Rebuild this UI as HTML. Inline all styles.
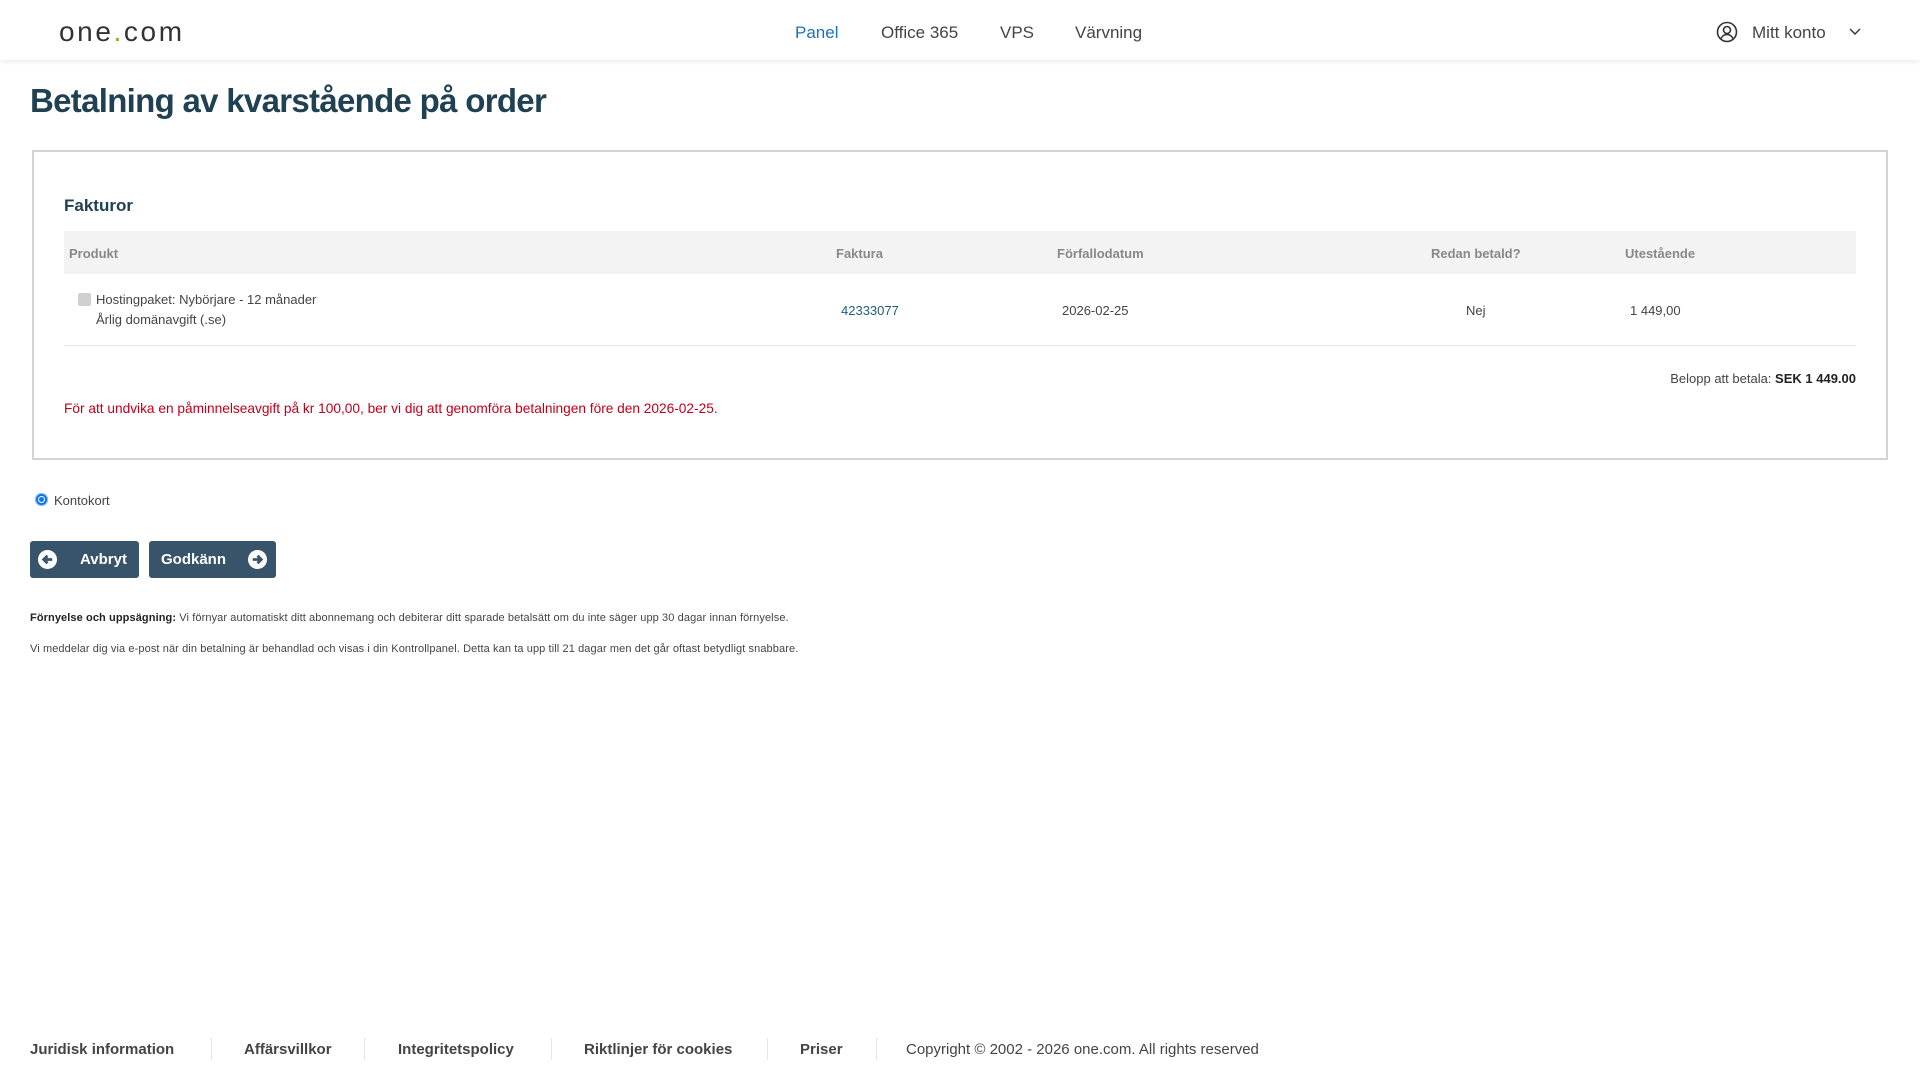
<!DOCTYPE html>
<html><head><meta charset="utf-8"><style>
*{margin:0;padding:0;box-sizing:border-box}
body{width:1920px;height:1080px;background:#fff;font-family:"Liberation Sans",sans-serif;color:#333;position:relative;overflow:hidden}
.a{position:absolute;white-space:nowrap}
.hdr{position:absolute;left:0;top:0;width:1920px;height:60px;background:#fff;box-shadow:0 2px 4px rgba(0,0,0,.08)}
.nav{font-size:17px;color:#444;top:23px}
.th{font-size:13px;color:#888;font-weight:bold;top:246px}
.td{font-size:13px;color:#444}
.btn{position:absolute;top:541px;height:37px;background:#37546b;border-radius:3px;color:#fff;font-weight:bold;font-size:15px}
.ft{font-size:15px;color:#444;font-weight:bold;top:1041px}
.sep{position:absolute;top:1038px;width:1px;height:22px;background:#e6e6e6}
</style></head><body>
<div class="hdr">
<div class="a" style="left:59px;top:16px;font-size:28px;letter-spacing:2.6px;color:#333;font-weight:normal">one<span style="color:#7ab51d">.</span>com</div>
<div class="a nav" style="left:795px;color:#1a74b8">Panel</div>
<div class="a nav" style="left:881px">Office 365</div>
<div class="a nav" style="left:1000px">VPS</div>
<div class="a nav" style="left:1075px">Värvning</div>
<svg class="a" style="left:1716px;top:21px" width="22" height="22" viewBox="0 0 22 22" fill="none" stroke="#333" stroke-width="1.6"><circle cx="11" cy="11" r="9.5"/><circle cx="11" cy="9" r="3.5"/><path d="M5 17.5c1.5-3 3.5-4 6-4s4.5 1 6 4"/></svg>
<div class="a nav" style="left:1752px">Mitt konto</div>
<svg class="a" style="left:1849px;top:28px" width="12" height="8" viewBox="0 0 12 8" fill="none" stroke="#333" stroke-width="1.4"><path d="M1 1l5 5 5-5"/></svg>
</div>
<div class="a" style="left:30px;top:82px;font-size:33px;font-weight:bold;color:#1f4152;letter-spacing:-0.7px">Betalning av kvarstående på order</div>
<div class="a" style="left:32px;top:150px;width:1856px;height:310px;border:2px solid #d4d4d4"></div>
<div class="a" style="left:64px;top:196px;font-size:17px;font-weight:bold;color:#1f4152">Fakturor</div>
<div class="a" style="left:64px;top:231px;width:1792px;height:43px;background:#f3f3f3"></div>
<div class="a th" style="left:69px">Produkt</div>
<div class="a th" style="left:836px">Faktura</div>
<div class="a th" style="left:1057px">Förfallodatum</div>
<div class="a th" style="left:1431px">Redan betald?</div>
<div class="a th" style="left:1625px">Utestående</div>
<div class="a" style="left:78px;top:293px;width:13px;height:13px;background:#d0d0d0;border-radius:2px"></div>
<div class="a td" style="left:96px;top:292px">Hostingpaket: Nybörjare - 12 månader</div>
<div class="a td" style="left:96px;top:312px">Årlig domänavgift (.se)</div>
<div class="a td" style="left:841px;top:303px;color:#1f5f7a">42333077</div>
<div class="a td" style="left:1062px;top:303px">2026-02-25</div>
<div class="a td" style="left:1466px;top:303px">Nej</div>
<div class="a td" style="left:1630px;top:303px">1 449,00</div>
<div class="a" style="left:64px;top:345px;width:1792px;height:1px;background:#e8e8e8"></div>
<div class="a td" style="right:64px;top:371px">Belopp att betala: <b style="color:#222">SEK 1 449.00</b></div>
<div class="a td" style="left:64px;top:401px;color:#c0001a;font-size:13.7px">För att undvika en påminnelseavgift på kr 100,00, ber vi dig att genomföra betalningen före den 2026-02-25.</div>
<div class="a" style="left:35px;top:493px;width:13px;height:13px;border-radius:50%;background:#0b75f0;box-shadow:0 0 0 1px #9cc2f3 inset"><div style="margin:3px;width:7px;height:7px;border-radius:50%;background:#0b75f0;border:1.5px solid #fff"></div></div>
<div class="a td" style="left:54px;top:493px">Kontokort</div>
<div class="btn" style="left:30px;width:109px"><svg class="a" style="left:8px;top:9px" width="19" height="19" viewBox="0 0 20 20"><circle cx="10" cy="10" r="10" fill="#fff"/><path d="M15 10H7M10 6l-4 4 4 4" stroke="#37546b" stroke-width="3" fill="none"/></svg><span class="a" style="left:50px;top:10px">Avbryt</span></div>
<div class="btn" style="left:149px;width:127px"><span class="a" style="left:12px;top:10px">Godkänn</span><svg class="a" style="left:99px;top:9px" width="19" height="19" viewBox="0 0 20 20"><circle cx="10" cy="10" r="10" fill="#fff"/><path d="M5 10h8M10 6l4 4-4 4" stroke="#37546b" stroke-width="3" fill="none"/></svg></div>
<div class="a" style="left:30px;top:612px;font-size:11px;color:#444;letter-spacing:0.1px"><b style="color:#222">Förnyelse och uppsägning:</b> Vi förnyar automatiskt ditt abonnemang och debiterar ditt sparade betalsätt om du inte säger upp 30 dagar innan förnyelse.</div>
<div class="a" style="left:30px;top:643px;font-size:11px;color:#444;letter-spacing:0.1px">Vi meddelar dig via e-post när din betalning är behandlad och visas i din Kontrollpanel. Detta kan ta upp till 21 dagar men det går oftast betydligt snabbare.</div>
<div class="a ft" style="left:30px">Juridisk information</div><div class="sep" style="left:211px"></div>
<div class="a ft" style="left:244px">Affärsvillkor</div><div class="sep" style="left:364px"></div>
<div class="a ft" style="left:398px">Integritetspolicy</div><div class="sep" style="left:551px"></div>
<div class="a ft" style="left:584px">Riktlinjer för cookies</div><div class="sep" style="left:767px"></div>
<div class="a ft" style="left:800px">Priser</div><div class="sep" style="left:876px"></div>
<div class="a ft" style="left:906px;font-weight:normal">Copyright © 2002 - 2026 one.com. All rights reserved</div>
</body></html>
